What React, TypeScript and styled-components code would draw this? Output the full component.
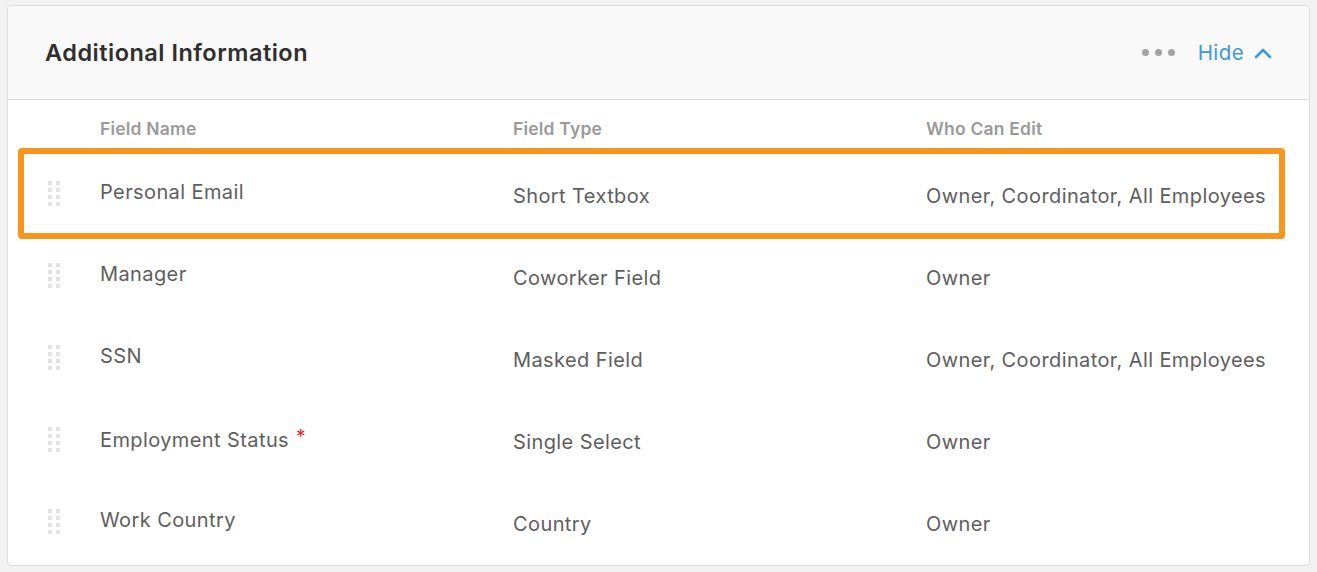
import React from "react";
import styled, { createGlobalStyle } from "styled-components";

const GlobalStyle = createGlobalStyle`
  html, body { margin: 0; padding: 0; background: #f2f2f2; }
  body { font-family: Inter, "Liberation Sans", Arial, sans-serif; -webkit-font-smoothing: antialiased; }
  * { box-sizing: border-box; }
`;

const Page = styled.div`
  padding: 5px 7px 0 7px;
`;

const Card = styled.section`
  width: 1303px;
  height: 561px;
  background: #fff;
  border: 1px solid #dcdcdc;
  border-radius: 4px;
  display: flex;
  flex-direction: column;
`;

const Header = styled.header`
  height: 94px;
  flex: none;
  background: #f9f9f9;
  border-bottom: 1px solid #dcdcdc;
  border-radius: 4px 4px 0 0;
  display: flex;
  align-items: center;
  justify-content: space-between;
  padding: 0 37px;
`;

const Title = styled.h2`
  margin: 0;
  font-size: 23.5px;
  font-weight: 600;
  color: #2f2f2f;
  letter-spacing: 0.5px;
`;

const Actions = styled.div`
  display: flex;
  align-items: center;
  gap: 23px;
`;

const Dots = styled.div`
  display: flex;
  gap: 6px;
`;

const Dot = styled.span`
  width: 7px;
  height: 7px;
  border-radius: 50%;
  background: #a3a3a3;
`;

const HideButton = styled.button`
  border: none;
  background: none;
  padding: 0;
  display: flex;
  align-items: center;
  gap: 10px;
  font-family: inherit;
  font-size: 20.5px;
  letter-spacing: 0.4px;
  color: #3f9ad8;
  cursor: pointer;
`;

const Table = styled.div`
  display: flex;
  flex-direction: column;
`;

const Grid = styled.div`
  display: grid;
  grid-template-columns: 92px 413px 413px 1fr;
  align-items: center;
`;

const HeadRow = styled(Grid)`
  height: 55px;
  padding-top: 2px;
`;

const HeadCell = styled.div`
  font-size: 17.5px;
  font-weight: 600;
  color: #9a9a9a;
  letter-spacing: 0.2px;
`;

const Row = styled(Grid)`
  position: relative;
  height: 82px;
`;

const Highlight = styled.div`
  position: absolute;
  left: 10px;
  top: -7px;
  width: 1267px;
  height: 91px;
  border: 6px solid #f8951d;
  border-radius: 4px;
  pointer-events: none;
`;

const Handle = styled.div`
  display: grid;
  grid-template-columns: 4px 4px;
  grid-auto-rows: 4px;
  column-gap: 4px;
  row-gap: 3px;
  margin-left: 40px;
  margin-bottom: 6px;
  span { background: #e3e3e3; }
`;

const Cell = styled.div<{ $lift?: boolean }>`
  font-size: 20px;
  letter-spacing: 0.4px;
  color: #5e5e5e;
  padding-bottom: ${(p) => (p.$lift ? "8px" : "0")};
  white-space: nowrap;
`;

const Required = styled.span`
  color: #e0262b;
  margin-left: 7px;
  font-size: 19px;
  vertical-align: 4px;
`;

const rows = [
  { name: "Personal Email", type: "Short Textbox", who: "Owner, Coordinator, All Employees", highlight: true },
  { name: "Manager", type: "Coworker Field", who: "Owner" },
  { name: "SSN", type: "Masked Field", who: "Owner, Coordinator, All Employees" },
  { name: "Employment Status", type: "Single Select", who: "Owner", required: true },
  { name: "Work Country", type: "Country", who: "Owner" },
];

const DragHandle = () => (
  <Handle>
    {Array.from({ length: 8 }).map((_, i) => (
      <span key={i} />
    ))}
  </Handle>
);

export default function App() {
  return (
    <>
      <GlobalStyle />
      <Page>
        <Card>
          <Header>
            <Title>Additional Information</Title>
            <Actions>
              <Dots>
                <Dot />
                <Dot />
                <Dot />
              </Dots>
              <HideButton>
                Hide
                <svg width="18" height="12" viewBox="0 0 18 12" fill="none">
                  <path d="M2 10 L9 3 L16 10" stroke="#3f9ad8" strokeWidth="2.6" strokeLinecap="round" strokeLinejoin="round" />
                </svg>
              </HideButton>
            </Actions>
          </Header>
          <Table>
            <HeadRow>
              <span />
              <HeadCell>Field Name</HeadCell>
              <HeadCell>Field Type</HeadCell>
              <HeadCell>Who Can Edit</HeadCell>
            </HeadRow>
            {rows.map((r) => (
              <Row key={r.name}>
                <DragHandle />
                <Cell $lift>
                  {r.name}
                  {r.required && <Required>*</Required>}
                </Cell>
                <Cell>{r.type}</Cell>
                <Cell>{r.who}</Cell>
                {r.highlight && <Highlight />}
              </Row>
            ))}
          </Table>
        </Card>
      </Page>
    </>
  );
}
